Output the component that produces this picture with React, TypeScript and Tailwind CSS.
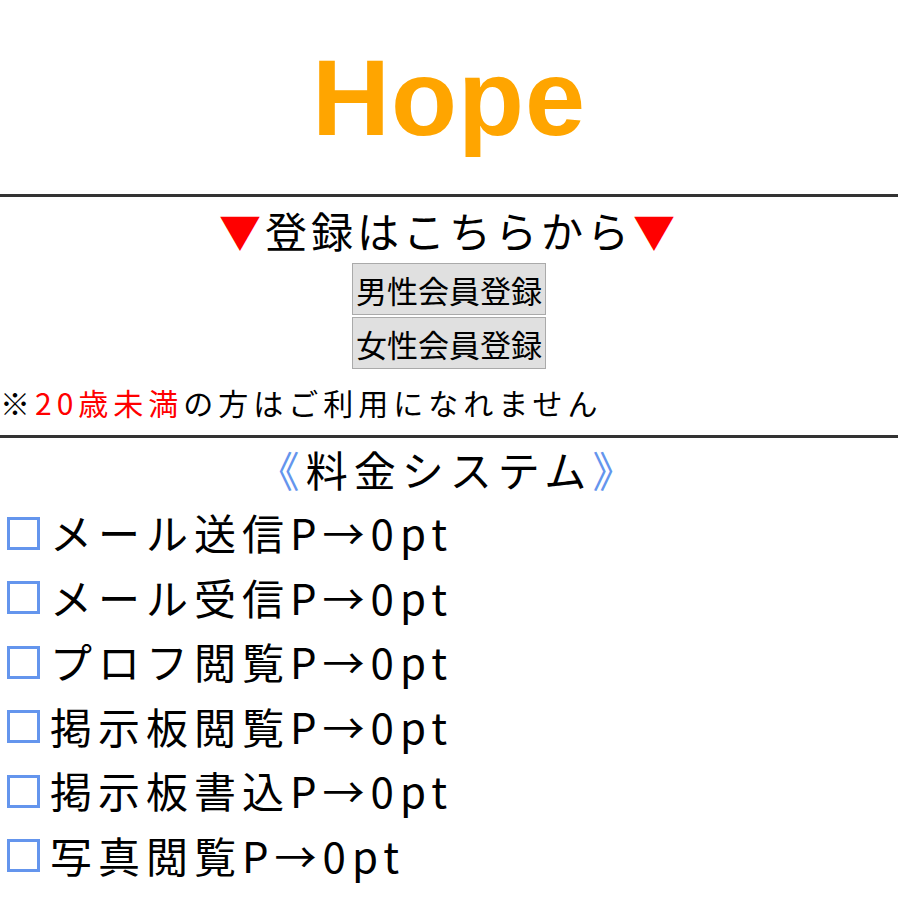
const jp = "font-['Noto_Sans_CJK_JP','Noto_Sans',sans-serif]";

const fees = [
  "メール送信",
  "メール受信",
  "プロフ閲覧",
  "掲示板閲覧",
  "掲示板書込",
  "写真閲覧",
];

export default function App() {
  return (
    <div className={`w-[898px] min-h-[900px] bg-white text-black ${jp}`}>
      <div className="h-[194px] flex items-center justify-center">
        <h1 className="font-['Liberation_Sans',Arial,sans-serif] font-bold text-[108px] leading-none text-[#ffa500] tracking-[1px] pt-[2px]">
          Hope
        </h1>
      </div>
      <div className="h-[3px] bg-[#333]" />

      <div className="flex flex-col items-center">
        <p className="text-[42px] leading-[66px] tracking-[4px]">
          <span className="text-[#ff0000]">▼</span>登録はこちらから<span className="text-[#ff0000]">▼</span>
        </p>
        <div className="flex flex-col items-center gap-[2px]">
          <button className="h-[52px] px-[3px] bg-[#e0e0e0] border border-[#aaa] text-[31px] leading-none">
            男性会員登録
          </button>
          <button className="h-[52px] px-[3px] bg-[#e0e0e0] border border-[#aaa] text-[31px] leading-none">
            女性会員登録
          </button>
        </div>
      </div>

      <p className="text-[30px] leading-[66px] tracking-[5px]">
        ※<span className="text-[#ff0000]">20歳未満</span>の方はご利用になれません
      </p>
      <div className="h-[3px] bg-[#333]" />

      <p className="text-center text-[42px] leading-[62px] tracking-[6px]">
        <span className="text-[#6495ed]">《</span>料金システム<span className="text-[#6495ed]">》</span>
      </p>

      <ul>
        {fees.map((name) => (
          <li key={name} className="flex items-center h-[64.5px] text-[42px] leading-[64.5px] tracking-[6px]">
            <span className="w-[33px] h-[33px] ml-[7px] mr-[10px] mt-[2px] border-[3px] border-[#6495ed] shrink-0" />
            <span>{name}P→0pt</span>
          </li>
        ))}
      </ul>
    </div>
  );
}
